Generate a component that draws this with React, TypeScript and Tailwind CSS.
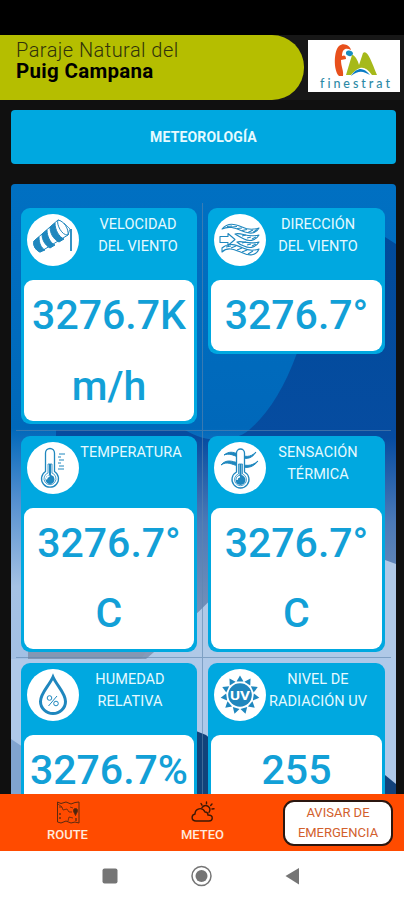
import type { ReactNode } from 'react';

const BLUE = '#1f87be';

type Reading = {
  title: string[];
  value: string[];
  icon: ReactNode;
  titleClass?: string;
};

function WindsockIcon() {
  return (
    <svg viewBox="0 0 52 52" className="size-full" fill="none" stroke={BLUE} strokeWidth="1">
      <path d="M7 27 L31 6 C37 8 41 15 41 21 L13 38 C8 36 6 31 7 27Z" fill="#fff" />
      <path d="M7 27 L12 23 C12 29 14 34 18 36 L13 38 C8 36 6 31 7 27Z" fill={BLUE} />
      <path d="M15 20 L20 16 C20 22 23 29 28 31 L23 34 C18 31 15 26 15 20Z" fill={BLUE} />
      <path d="M23 13 L28 9 C28 16 32 23 37 25 L32 28 C26 25 23 19 23 13Z" fill={BLUE} />
      <path d="M31 6 C29 10 35 22 41 21 C42 15 37 7 31 6Z" fill="#fff" />
      <path d="M37 9 L43 15 M41 21 L43 15" strokeWidth=".8" />
      <path d="M44 15V37" strokeWidth="1.8" />
    </svg>
  );
}

function WindDirectionIcon() {
  return (
    <svg viewBox="0 0 52 52" className="size-full" fill="none" stroke={BLUE} strokeWidth="1.1" strokeLinejoin="round">
      <path d="M8 15 C14 8 21 10 28 13 C34 16 39 16 45 14 C42 20 37 20 31 18 C23 15 16 11 8 15Z" />
      <path d="M13 12.500l5-.5M18 13l5-.5M23 14.500l5-.5M28 16.500l5-1M34 18.500l5-2.500M39 18.500l4-3" />
      <path d="M6 22.500h8v-3l7 6-7 6v-3H6Z" />
      <path d="M21 20 C28 18 32 24 45 21 C41 28 34 27 30 25 C26 23 24 22 21 20Z" />
      <path d="M23 28 C29 26 33 31 45 28 C41 35 34 34 30 32 C27 31 25 30 23 28Z" />
      <path d="M8 34 C15 28 22 31 29 34 C35 37 39 37 45 35 C42 42 35 42 29 39 C21 36 14 32 8 38Z" />
      <path d="M12 33l5-1M17 34l5-2M23 36l5-2M28 38l5-2M34 40l5-3M28 22l4-1M33 24l4-1M38 25l4-2M28 29l4-1M33 31l4-1M38 32l4-2" />
    </svg>
  );
}

function ThermometerIcon() {
  return (
    <svg viewBox="0 0 52 52" className="size-full" fill="none" stroke={BLUE} strokeWidth="1.3">
      <path d="M18.500 29.500V11a4.500 4.500 0 0 1 9 0v18.500a8.500 8.500 0 1 1-9 0Z" />
      <path d="M21 31V22h4v9a6 6 0 1 1-4 0Z" strokeWidth=".8" />
      <circle cx="23" cy="37.500" r="4.500" fill={BLUE} stroke="none" />
      <path d="M23 22v14" strokeWidth="2.200" />
      <path d="M19.500 37.500a3.500 3.500 0 0 1 3-3.500" stroke="#fff" />
      <path d="M32 12h6M31 15h3M32 18h5M31 21h3M32 24h5M31 27h6" strokeWidth="1" />
    </svg>
  );
}

function ThermalSensationIcon() {
  return (
    <svg viewBox="0 0 52 52" className="size-full" fill="none" stroke={BLUE} strokeWidth="1.3">
      <path
        d="M10 13c5-4 9-3 14-1 7 3 12 4 18-2C37 18 31 17 24 15 19 13 15 11 10 13ZM7 23c5-6 11-4 17-2 7 3 13 4 20-2C38 27 31 26 24 24 17 22 13 19 7 23Z"
        fill={BLUE}
        strokeWidth="1"
      />
      <path d="M22.500 30V11a4 4 0 0 1 8 0v19a8.500 8.500 0 1 1-8 0Z" fill="#fff" />
      <path d="M24.500 22h4v10a6 6 0 1 1-4 0Z" strokeWidth=".8" />
      <circle cx="26.500" cy="38" r="5" fill={BLUE} stroke="none" />
      <path d="M26.500 22v14" strokeWidth="2.200" />
      <path d="M23 38a3.500 3.500 0 0 1 3-3.500" stroke="#fff" />
    </svg>
  );
}

function HumidityIcon() {
  return (
    <svg viewBox="0 0 52 52" className="size-full" fill="none" stroke={BLUE}>
      <path d="M26 8C22 17 13.500 24 13.500 32.500a12.500 12 0 0 0 25 0C38.500 24 30 17 26 8Z" strokeWidth="3" />
      <path d="M30 27 21.500 37" strokeWidth="1" />
      <circle cx="22.500" cy="29" r="2.300" strokeWidth="1" />
      <circle cx="29" cy="34.500" r="2.300" strokeWidth="1" />
    </svg>
  );
}

function UvIcon() {
  const rays = Array.from({ length: 11 }, (_, i) => (i * 360) / 11);
  return (
    <svg viewBox="0 0 52 52" className="size-full">
      {rays.map(angle => (
        <path key={angle} d="M22.500 12.500 26 6.500l3.500 6Z" fill={BLUE} transform={`rotate(${angle} 26 26)`} />
      ))}
      <circle cx="26" cy="26" r="11.800" fill={BLUE} />
      <text
        x="26"
        y="30.800"
        textAnchor="middle"
        fill="#fff"
        stroke={BLUE}
        strokeWidth="1"
        paintOrder="stroke"
        fontSize="13.500"
        fontWeight="700"
        textLength="20"
        lengthAdjust="spacingAndGlyphs"
        fontFamily="Roboto, sans-serif"
      >
        UV
      </text>
    </svg>
  );
}

const readings: Reading[] = [
  {
    title: ['VELOCIDAD', 'DEL VIENTO'],
    value: ['3276.7K', 'm/h'],
    icon: <WindsockIcon />,
    titleClass: 'ml-[8px]',
  },
  { title: ['DIRECCIÓN', 'DEL VIENTO'], value: ['3276.7°'], icon: <WindDirectionIcon />, titleClass: 'ml-px' },
  { title: ['TEMPERATURA'], value: ['3276.7°', 'C'], icon: <ThermometerIcon />, titleClass: 'ml-px' },
  { title: ['SENSACIÓN', 'TÉRMICA'], value: ['3276.7°', 'C'], icon: <ThermalSensationIcon />, titleClass: 'ml-px' },
  { title: ['HUMEDAD', 'RELATIVA'], value: ['3276.7%'], icon: <HumidityIcon /> },
  { title: ['NIVEL DE', 'RADIACIÓN UV'], value: ['255'], icon: <UvIcon />, titleClass: 'ml-px' },
];

function ReadingCard({ title, value, icon, titleClass = '' }: Reading) {
  return (
    <div className="rounded-[9px] bg-[#00a8e0] px-[3px] pb-[3px]">
      <div className="flex h-[72px] pt-[6px] pl-[3px]">
        <div className="size-[52px] shrink-0 rounded-full bg-white">{icon}</div>
        <h2
          className={`w-[102px] shrink-0 text-center text-[14.5px] leading-[22px] tracking-[0.05px] whitespace-nowrap text-[#e6faff] ${titleClass}`}
        >
          {title.map(line => (
            <span key={line} className="flex justify-center">
              {line}
            </span>
          ))}
        </h2>
      </div>
      <div className="rounded-[9px] bg-white text-center text-[41px] leading-[70.5px] font-medium text-[#12a0d7]">
        {value.map(line => (
          <div key={line} className="whitespace-nowrap">
            {line}
          </div>
        ))}
      </div>
    </div>
  );
}

function Scenery() {
  return (
    <svg className="absolute inset-0 size-full" viewBox="0 0 385 610" preserveAspectRatio="none">
      <defs>
        <linearGradient id="sky" x1="0" y1="0" x2="0" y2="1">
          <stop offset="0" stopColor="#0070c2" />
          <stop offset=".4" stopColor="#0068ba" />
          <stop offset=".52" stopColor="#5590d0" />
          <stop offset=".66" stopColor="#a5c2e4" />
          <stop offset="1" stopColor="#9dbce4" />
        </linearGradient>
        <linearGradient id="shade" x1="0" y1="0" x2="0" y2="1">
          <stop offset="0" stopColor="#004b9b" />
          <stop offset=".48" stopColor="#064ca0" />
          <stop offset=".68" stopColor="#4c7ab7" />
          <stop offset="1" stopColor="#889bb8" />
        </linearGradient>
      </defs>
      <rect width="385" height="610" fill="url(#sky)" />
      <path d="M385 60 374 53C330 32 290 100 286 169C273 205 256 231 238 246C224 258 196 260 174 246L45 246V475H385Z" fill="url(#shade)" />
      <path d="M135 475C165 450 192 424 203 412L374 376 385 380V475Z" fill="#b0c9e7" />
      <path d="M0 475H385V610H0Z" fill="#afc9e9" />
      <path d="M17 430H160L130 475H17Z" fill="#8497b3" />
      <path d="M180 545 195 551 204 559V610H172Z" fill="#11437b" />
      <path d="M365 585 374 591 385 600V610H365Z" fill="#12427b" />
      <path d="M0 555 12 563V610H0Z" fill="#80a4cf" />
    </svg>
  );
}

function FinestratLogo() {
  return (
    <svg viewBox="0 0 92 52" className="h-[52px] w-[92px] bg-white">
      <path d="M31 36C25 30 26 10 31 6C36 2 42 6 43 10C38 7 34 9 34 16C36 15 38 15 38 19L33 20C33 27 36 31 35 36Z" fill="#e8501c" />
      <path d="M38 12c2-2 5-2 7 1 0 4-5 4-7 1Z" fill="#168dc0" />
      <path d="M38 35 44 15C46 14 50 20 51 25L55 13C59 9 63 20 69 35H64C57 26 52 25 43 35Z" fill="#a6b91a" />
      <path d="M43 36C50 26 56 28 62 35C55 31 51 30 43 36Z" fill="#087bc5" />
      <text
        x="12"
        y="47.800"
        fill="#2c8aa6"
        fontFamily="Lato, sans-serif"
        fontSize="12.500"
        fontWeight="500"
        textLength="70"
        style={{ fontVariantLigatures: 'none' }}
      >
        finestrat
      </text>
    </svg>
  );
}

function RouteIcon() {
  return (
    <svg viewBox="0 0 24 24" className="size-6" fill="none" stroke="#5a2a10" strokeWidth="1">
      <path d="M1.500 2 5 3.500l5-1.500 5 2 4-1.500 4-.5v21l-4-1-4 1-5-2-5 2-3.500-1Z" />
      <path d="M3 7h3l1 3 4-1 2 3h3M2 4l4 3M12 21l1-4 4 1M14 7l3 1" strokeWidth=".8" />
      <path d="M17.500 10.500a2 2 0 0 1 4 0c0 2-1 2-2 5-1-3-2-3-2-5Z" fill="#4b240d" />
      <path d="M4 13v2M4 17v2M20 18v3" strokeWidth="1.300" />
    </svg>
  );
}

function MeteoIcon() {
  return (
    <svg viewBox="0 0 24 24" className="size-6" fill="none" stroke="#3d1805" strokeWidth="1.400" strokeLinecap="round">
      <path d="M5 21c-5 0-5-6-1-7 0-5 7-8 10-2 2 0 3 1 3 3 6 0 5 6 1 6Z" />
      <path d="M11 7.500c4-4.500 10 0 7 5M15.500 2v1.800M10 3.500l1 1.700M21 4l-1.300 1.400M21 9l2-.2" />
    </svg>
  );
}

export default function App() {
  return (
    <div className="flex h-[900px] w-[404px] flex-col overflow-hidden bg-[#101010] font-[Roboto,sans-serif]">
      <div className="h-[35px] shrink-0 bg-black" />
      <header className="flex h-[65px] shrink-0 bg-[#171717]">
        <div className="w-[304px] rounded-r-[32px] bg-[#b5be00] pt-[5px] pl-4 text-[20px] leading-[21px] text-black">
          <div className="font-light tracking-[0.45px] text-[#30320b]">Paraje Natural del</div>
          <h1 className="text-[20.5px] font-bold tracking-[0.3px]">Puig Campana</h1>
        </div>
        <div className="mt-[5px] ml-1">
          <FinestratLogo />
        </div>
      </header>

      <div className="mt-2.5 mr-2 ml-[11px] flex h-[54px] shrink-0 items-center justify-center rounded-[4px] bg-[#00a8e0] pt-px text-[14px] font-bold tracking-[0.15px] text-[#e6faff]">
        METEOROLOGÍA
      </div>

      <main className="relative mt-5 mr-2 ml-[11px] min-h-0 flex-1 overflow-hidden rounded-t-[4px]">
        <Scenery />
        <div className="relative mx-[5px] mt-[19px] grid grid-cols-[187px_188px] grid-rows-[227.5px_227.5px_227.5px]">
          {readings.map((reading, i) => (
            <div
              key={reading.title.join(' ')}
              className={`border-b border-[#5d85ad]/60 pt-[5px] pl-[5px] ${i % 2 === 0 ? 'border-r pr-[5px]' : 'pr-[6px]'}`}
            >
              <ReadingCard {...reading} />
            </div>
          ))}
        </div>
      </main>

      <nav className="flex h-[57px] shrink-0 bg-[#ff4b00] text-[13px] font-medium text-[#ffe9dc]">
        <div className="flex w-[135px] flex-col items-center pt-[6px]">
          <RouteIcon />
          <span className="leading-[21px]">ROUTE</span>
        </div>
        <div className="flex w-[135px] flex-col items-center pt-[6px]">
          <MeteoIcon />
          <span className="leading-[21px]">METEO</span>
        </div>
        <button className="mt-[6px] ml-[13px] h-[46px] w-[110px] rounded-[11px] border-2 border-[#2b1710] bg-white text-center text-[13px] leading-[20.5px] font-normal text-[#d2602c]">
          AVISAR DE
          <br />
          EMERGENCIA
        </button>
      </nav>

      <div className="h-[49px] shrink-0 bg-white">
        <svg viewBox="0 0 404 49" className="h-[49px] w-[404px]" fill="#757575">
          <rect x="102.500" y="17.500" width="15" height="15" rx="2" />
          <circle cx="201.500" cy="25" r="6" />
          <circle cx="201.500" cy="25" r="9.500" fill="none" stroke="#757575" strokeWidth="1.500" />
          <path d="M285.500 25 299 17v16.500Z" />
        </svg>
      </div>
    </div>
  );
}
